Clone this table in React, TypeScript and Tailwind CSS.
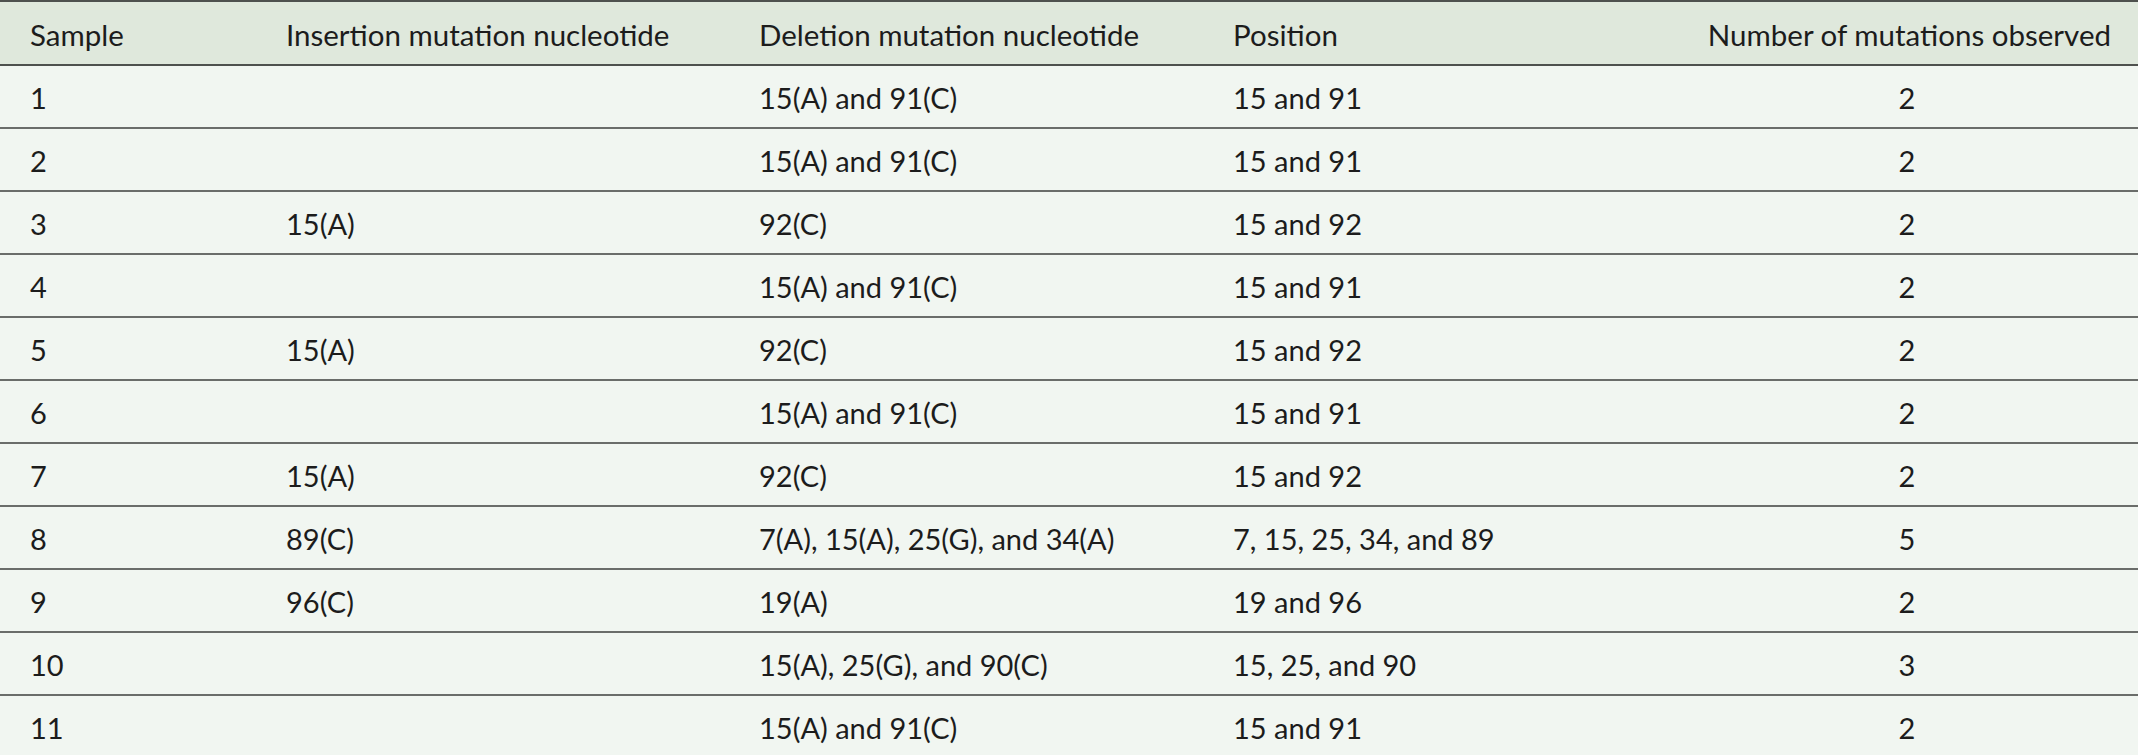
const rows: [string, string, string, string, string][] = [
  ["1", "", "15(A) and 91(C)", "15 and 91", "2"],
  ["2", "", "15(A) and 91(C)", "15 and 91", "2"],
  ["3", "15(A)", "92(C)", "15 and 92", "2"],
  ["4", "", "15(A) and 91(C)", "15 and 91", "2"],
  ["5", "15(A)", "92(C)", "15 and 92", "2"],
  ["6", "", "15(A) and 91(C)", "15 and 91", "2"],
  ["7", "15(A)", "92(C)", "15 and 92", "2"],
  ["8", "89(C)", "7(A), 15(A), 25(G), and 34(A)", "7, 15, 25, 34, and 89", "5"],
  ["9", "96(C)", "19(A)", "19 and 96", "2"],
  ["10", "", "15(A), 25(G), and 90(C)", "15, 25, and 90", "3"],
  ["11", "", "15(A) and 91(C)", "15 and 91", "2"],
];

export default function App() {
  return (
    <div className="w-[2138px] h-[755px] overflow-hidden bg-[#f1f6f1] font-['Lato',sans-serif] text-[29px] text-[#1c1c1c]">
      <table className="w-full border-collapse table-fixed">
        <colgroup>
          <col className="w-[256px]" />
          <col className="w-[473px]" />
          <col className="w-[474px]" />
          <col className="w-[473px]" />
          <col className="w-[462px]" />
        </colgroup>
        <thead>
          <tr className="h-[64px] bg-[#dfe8dc] border-t-2 border-b-2 border-[#4e514e] text-[29.5px]">
            <th className="pl-[30px] pt-[4px] text-left font-normal">Sample</th>
            <th className="pl-[30px] pt-[4px] text-left font-normal">Insertion mutation nucleotide</th>
            <th className="pl-[30px] pt-[4px] text-left font-normal">Deletion mutation nucleotide</th>
            <th className="pl-[30px] pt-[4px] text-left font-normal">Position</th>
            <th className="pr-[27px] pt-[4px] text-right font-normal whitespace-nowrap">Number of mutations observed</th>
          </tr>
        </thead>
        <tbody>
          {rows.map((r, i) => (
            <tr
              key={r[0]}
              className={
                i === rows.length - 1
                  ? "h-[62px] border-b-[3px] border-[#2f312f]"
                  : "h-[63px] border-b-2 border-[#6a6d6a]"
              }
            >
              <td className="pl-[30px] pt-[3px]">{r[0]}</td>
              <td className="pl-[30px] pt-[3px]">{r[1]}</td>
              <td className="pl-[30px] pt-[3px]">{r[2]}</td>
              <td className="pl-[30px] pt-[3px]">{r[3]}</td>
              <td className="pt-[3px] text-center">{r[4]}</td>
            </tr>
          ))}
        </tbody>
      </table>
    </div>
  );
}
